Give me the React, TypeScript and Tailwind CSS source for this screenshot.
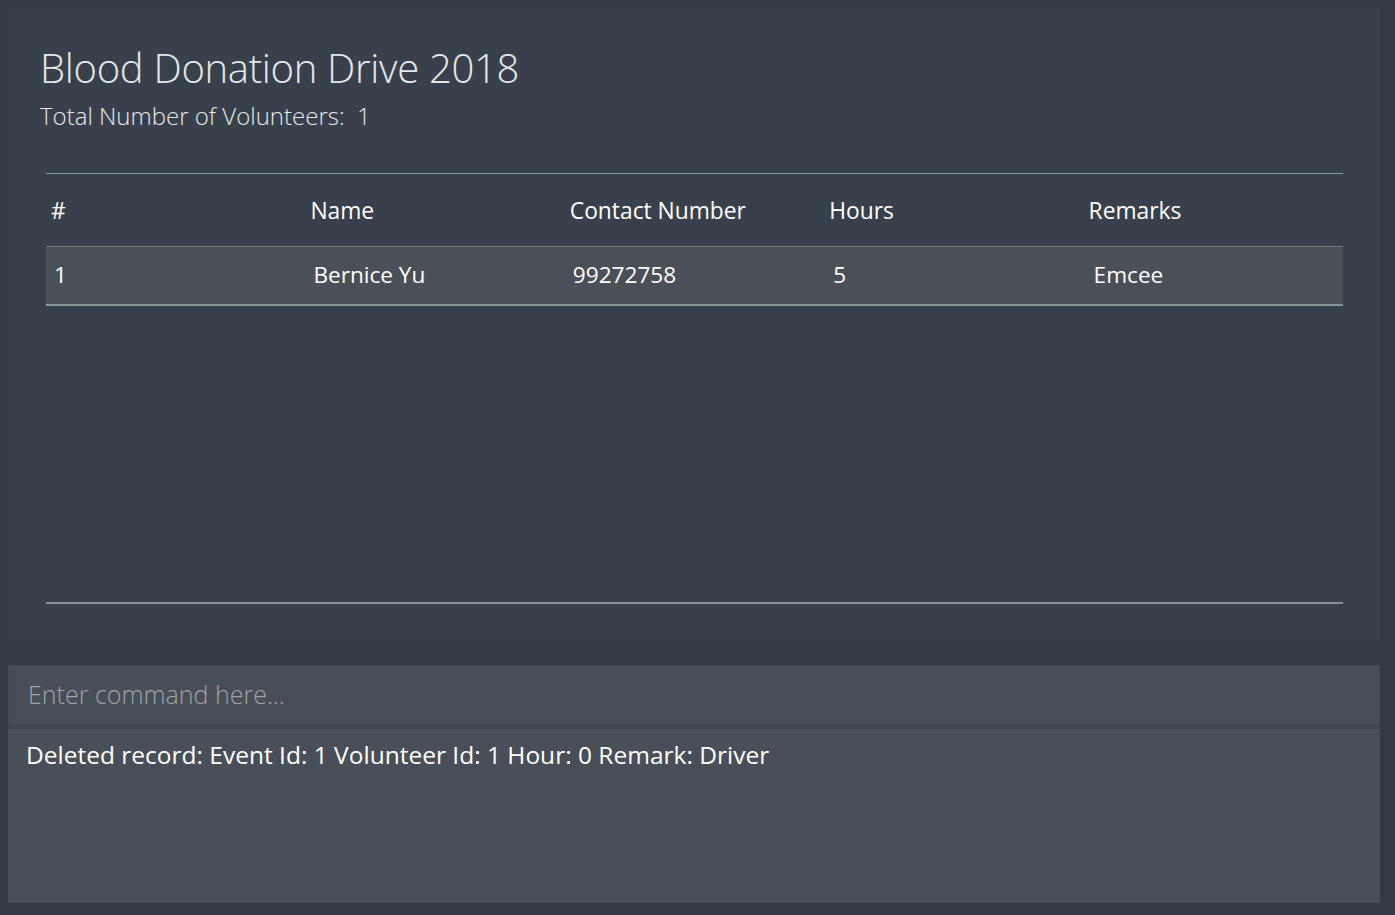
const volunteers = [
  { id: 1, name: 'Bernice Yu', phone: '99272758', hours: '5', remark: 'Emcee' },
];

const columns = ['#', 'Name', 'Contact Number', 'Hours', 'Remarks'];

export default function App() {
  return (
    <div
      className="w-[1395px] h-[915px] bg-[#333a45] pt-2 pl-2 pr-[15px] flex flex-col text-white"
      style={{ fontFamily: '"Open Sans", "Noto Sans", sans-serif' }}
    >
      {/* Event panel */}
      <div className="h-[632px] bg-[#38414b] flex flex-col pl-8 pr-[37px]">
        <h1 className="mt-[36px] text-[40px] font-light leading-[48px] text-[#e6e8ea] tracking-[-0.3px]">
          Blood Donation Drive 2018
        </h1>
        <p className="mt-[10px] text-[24px] font-light leading-[28px] text-[#e6e8ea]">
          Total Number of Volunteers:&nbsp;&nbsp;1
        </p>

        <div className="ml-[6px] mt-[43px] flex flex-col flex-1 mb-[36px]">
          <div className="border-t border-[#8a969c]">
            <div className="grid grid-cols-5 h-[72px] items-center pt-[3px] text-[22.8px] leading-none">
              {columns.map((c) => (
                <div key={c} className="pl-[5px]">{c}</div>
              ))}
            </div>
            {volunteers.map((v) => (
              <div
                key={v.id}
                className="grid grid-cols-5 h-[60px] items-center bg-[#4a5058] border-t border-[#717b82] border-b-2 border-b-[#8a969c] text-[22.6px] leading-none"
              >
                <div className="pl-[8px]">{v.id}</div>
                <div className="pl-[8px]">{v.name}</div>
                <div className="pl-[8px]">{v.phone}</div>
                <div className="pl-[9px]">{v.hours}</div>
                <div className="pl-[10px]">{v.remark}</div>
              </div>
            ))}
          </div>
          <div className="flex-1" />
          <div className="border-t-2 border-[#8a8f93]" />
        </div>
      </div>

      {/* Command box */}
      <div className="mt-[25px] h-[60px] bg-[#474e57] border border-[#424952] flex items-center pl-[19px]">
        <span className="text-[25px] text-[#9ea3a8] font-light">Enter command here...</span>
      </div>
      <div className="h-[4px] bg-[#3e454e]" />

      {/* Result display */}
      <div className="h-[174px] bg-[#484f58] pl-[18px] pt-[9px]">
        <p className="text-[24.5px] leading-[34px]">
          Deleted record: Event Id: 1 Volunteer Id: 1 Hour: 0 Remark: Driver
        </p>
      </div>
    </div>
  );
}
